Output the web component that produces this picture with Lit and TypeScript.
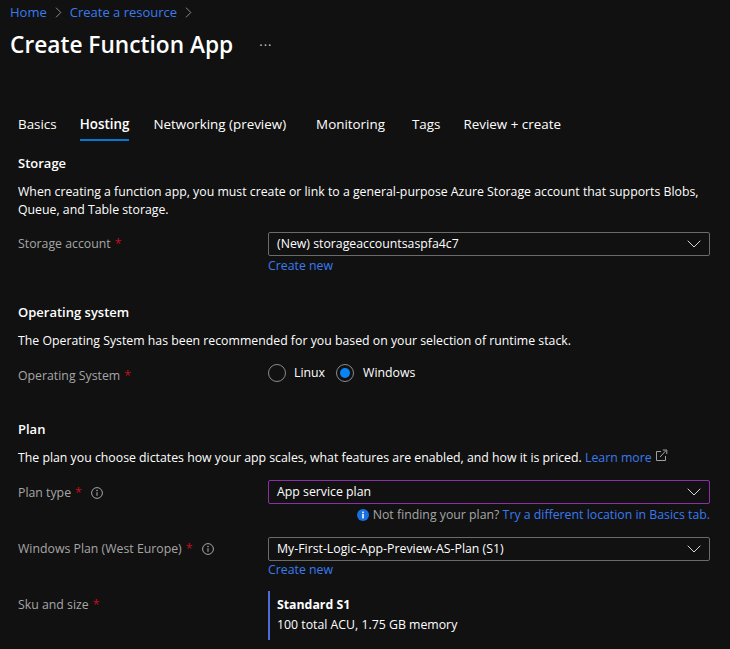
import { LitElement, html, css, svg } from "lit";
import { customElement } from "lit/decorators.js";

const chevron = html`<svg class="chev" width="14" height="8" viewBox="0 0 14 8"><path d="M.7.7 7 7 13.3.7" fill="none" stroke="#d6d6d6" stroke-width="1"/></svg>`;
const crumbSep = html`<svg class="sep" width="7" height="11" viewBox="0 0 7 11"><path d="M1 .7 5.8 5.5 1 10.3" fill="none" stroke="#8a8a8a" stroke-width="1"/></svg>`;
const infoIcon = html`<svg class="info" width="12" height="12" viewBox="0 0 12 12"><circle cx="6" cy="6" r="5.4" fill="none" stroke="#a6a6a6"/><path d="M6 5.3v3.4" stroke="#a6a6a6" stroke-width="1.1"/><circle cx="6" cy="3.5" r=".8" fill="#a6a6a6"/></svg>`;
const extIcon = svg`<path d="M6 2.5H1.5v9h9V7M5 8l6-6.5M7.8 1h4v4" fill="none" stroke="#a0a0a0"/>`;

@customElement("app-root")
export class AppRoot extends LitElement {
  static styles = css`
    :host {
      display: block;
      height: 649px;
      overflow: hidden;
      background: #111111;
      color: #ffffff;
      font-family: "Open Sans", "Noto Sans", sans-serif;
      font-size: 12.3px;
      line-height: 18px;
    }
    a { color: #3a7bf0; text-decoration: none; }
    .crumbs {
      display: flex;
      align-items: center;
      gap: 8px;
      padding: 3px 0 0 10px;
      font-size: 13px;
    }
    .title-row {
      display: flex;
      align-items: center;
      padding: 9px 0 0 10px;
    }
    h1 {
      margin: 0;
      font-size: 22.7px;
      font-weight: 600;
      line-height: 30px;
    }
    .dots {
      margin-left: 26px;
      color: #c8c8c8;
      font-size: 13px;
      line-height: 12px;
      letter-spacing: 1px;
    }
    .tabs {
      display: flex;
      margin: 53px 0 0 18px;
      font-size: 13.4px;
    }
    .tab {
      height: 24px;
      padding-top: 2px;
      box-sizing: content-box;
      white-space: nowrap;
    }
    .tab:nth-child(1) { margin-right: 23px; }
    .tab:nth-child(2) { margin-right: 24px; }
    .tab:nth-child(3) { margin-right: 30px; }
    .tab:nth-child(4) { margin-right: 27px; }
    .tab:nth-child(5) { margin-right: 23px; }
    .tab.active {
      font-weight: 600;
      border-bottom: 2px solid #0078d4;
    }
    .form { padding: 13px 20px 0 18px; }
    h2 {
      margin: 0;
      font-size: 13px;
      font-weight: 600;
      line-height: 18px;
    }
    p { margin: 11px 0 0; }
    .row {
      display: grid;
      grid-template-columns: 250px 442px;
      margin-top: 13px;
    }
    .row.sku-row { margin-top: 12px; }
    .label {
      color: #a6a6a6;
      display: flex;
      align-items: flex-start;
      white-space: nowrap;
      padding-top: 3px;
    }
    .label.low { padding-top: 4px; }
    .sku-row .label { padding-top: 5px; }
    .req { color: #c50f1f; margin-left: 4px; }
    .info { margin: 3px 0 0 9px; }
    .select {
      height: 24px;
      box-sizing: border-box;
      border: 1px solid #6b6b6b;
      border-radius: 2px;
      padding: 0 8px 0 8px;
      display: flex;
      align-items: center;
      justify-content: space-between;
    }
    .select.focus { border-color: #8d2fa8; }
    .link { display: block; padding-top: 1px; }
    .link.tight { padding-top: 0; }
    .radios {
      display: flex;
      align-items: center;
      gap: 8px;
      height: 18px;
      margin: 1px 0 10px;
    }
    .radio {
      width: 18px;
      height: 18px;
      box-sizing: border-box;
      border: 1px solid #8a8a8a;
      border-radius: 50%;
      display: flex;
      align-items: center;
      justify-content: center;
    }
    .radio.on { margin-right: 1px; }
    .radio.on::after {
      content: "";
      width: 10px;
      height: 10px;
      border-radius: 50%;
      background: #0a84f5;
    }
    .opt { margin-right: 3px; }
    .hint {
      color: #a6a6a6;
      display: flex;
      justify-content: flex-end;
      align-items: center;
      gap: 4px;
      white-space: nowrap;
      padding-top: 2px;
    }
    .sku {
      border-left: 2px solid #4f6bd8;
      padding: 4px 0 5px 7px;
      line-height: 20px;
    }
    .sku b { font-weight: 700; }
    .sec { margin-top: 28px; }
  `;

  private select(value: string, focus = false) {
    return html`<div class="select ${focus ? "focus" : ""}"><span>${value}</span>${chevron}</div>`;
  }

  render() {
    return html`
      <nav class="crumbs">
        <a href="#">Home</a>${crumbSep}<a href="#">Create a resource</a>${crumbSep}
      </nav>
      <div class="title-row">
        <h1>Create Function App</h1>
        <span class="dots">···</span>
      </div>
      <div class="tabs">
        <div class="tab">Basics</div>
        <div class="tab active">Hosting</div>
        <div class="tab">Networking (preview)</div>
        <div class="tab">Monitoring</div>
        <div class="tab">Tags</div>
        <div class="tab">Review + create</div>
      </div>
      <div class="form">
        <h2>Storage</h2>
        <p>When creating a function app, you must create or link to a general-purpose Azure Storage account that supports Blobs, Queue, and Table storage.</p>
        <div class="row">
          <div class="label">Storage account<span class="req">*</span></div>
          <div>
            ${this.select("(New) storageaccountsaspfa4c7")}
            <a class="link" href="#">Create new</a>
          </div>
        </div>
        <h2 class="sec">Operating system</h2>
        <p>The Operating System has been recommended for you based on your selection of runtime stack.</p>
        <div class="row">
          <div class="label low">Operating System<span class="req">*</span></div>
          <div class="radios">
            <span class="radio"></span><span class="opt">Linux</span>
            <span class="radio on"></span><span class="opt">Windows</span>
          </div>
        </div>
        <h2 class="sec">Plan</h2>
        <p>The plan you choose dictates how your app scales, what features are enabled, and how it is priced. <a href="#">Learn more</a> <svg width="13" height="13" viewBox="0 0 13 13">${extIcon}</svg></p>
        <div class="row">
          <div class="label low">Plan type<span class="req">*</span>${infoIcon}</div>
          <div>
            ${this.select("App service plan", true)}
            <div class="hint">
              <svg width="12" height="12" viewBox="0 0 12 12"><circle cx="6" cy="6" r="6" fill="#1a6fe0"/><rect x="5.2" y="5" width="1.6" height="4.4" fill="#fff"/><rect x="5.2" y="2.6" width="1.6" height="1.6" fill="#fff"/></svg>
              <span>Not finding your plan? <a href="#">Try a different location in Basics tab.</a></span>
            </div>
          </div>
        </div>
        <div class="row">
          <div class="label">Windows Plan (West Europe)<span class="req">*</span>${infoIcon}</div>
          <div>
            ${this.select("My-First-Logic-App-Preview-AS-Plan (S1)")}
            <a class="link tight" href="#">Create new</a>
          </div>
        </div>
        <div class="row sku-row">
          <div class="label">Sku and size<span class="req">*</span></div>
          <div class="sku"><b>Standard S1</b><br />100 total ACU, 1.75 GB memory</div>
        </div>
      </div>
    `;
  }
}
